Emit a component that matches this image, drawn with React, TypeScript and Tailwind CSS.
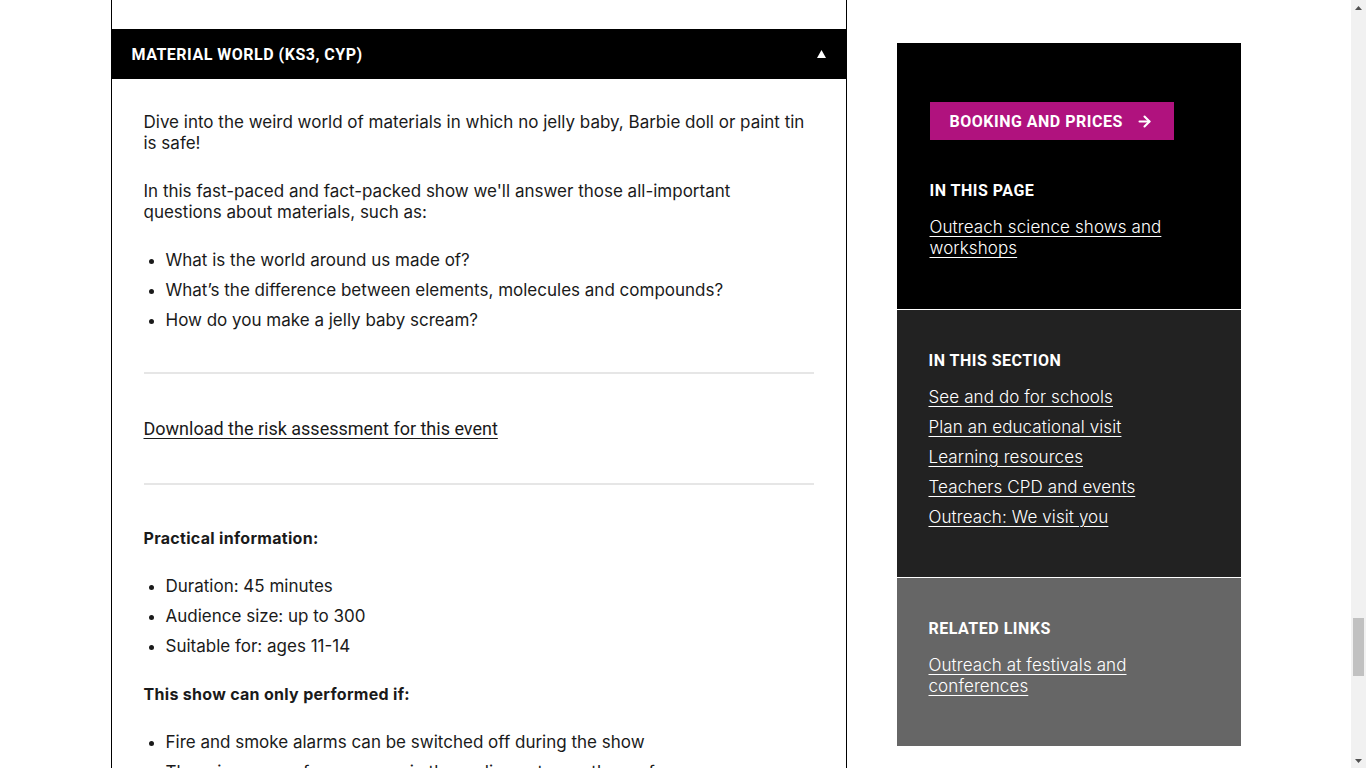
import { ArrowRight } from 'lucide-react';

const body = "font-['Inter',sans-serif] text-[17px] leading-[21px] text-[#1a1a1a]";
const sideLink = "font-['Inter',sans-serif] text-[17px] leading-[21px] tracking-[0.1px] text-white underline underline-offset-[3px] font-light";
const heading = "font-['Roboto',sans-serif] font-bold text-[16px] leading-[21px] tracking-[0.5px] uppercase text-white";

function Scrollbar() {
  return (
    <div className="w-[15px] h-screen bg-[#f1f1f1] flex flex-col items-center shrink-0">
      <div className="h-[15px] flex items-center justify-center">
        <svg width="7" height="4" viewBox="0 0 7 4"><polygon points="3.5,0 7,4 0,4" fill="#505050" /></svg>
      </div>
      <div className="h-[603px]" />
      <div className="h-[58px] w-[11px] bg-[#c1c1c1]" />
      <div className="flex-1" />
      <div className="h-[15px] flex items-center justify-center">
        <svg width="7" height="4" viewBox="0 0 7 4"><polygon points="0,0 7,0 3.5,4" fill="#505050" /></svg>
      </div>
    </div>
  );
}

export default function App() {
  return (
    <div className="flex h-screen overflow-hidden bg-white">
      <div className="flex-1 overflow-hidden">
        <div className="mx-auto w-[1130px] flex gap-[50px] items-start">
          <main className="w-[736px] border-x border-black">
            <div className="h-[29px]" />
            <button className="w-full h-[50px] bg-black flex items-center justify-between px-5">
              <span className={heading}>Material World (KS3, CYP)</span>
              <svg width="9" height="8" viewBox="0 0 9 8"><polygon points="4.5,0 9,8 0,8" fill="#fff" /></svg>
            </button>

            <div className={`pl-8 pr-8 pt-[33px] pb-10 ${body}`}>
              <p className="mb-[27px] pr-[6px]">
                Dive into the weird world of materials in which no jelly baby, Barbie doll or paint tin is safe!
              </p>
              <p className="mb-[27px] pr-[6px]">
                In this fast-paced and fact-packed show we'll answer those all-important questions about materials, such as:
              </p>
              <ul className="list-disc pl-[22px] space-y-[9px] mb-[41px]">
                <li>What is the world around us made of?</li>
                <li>What’s the difference between elements, molecules and compounds?</li>
                <li>How do you make a jelly baby scream?</li>
              </ul>

              <hr className="border-0 h-[2px] bg-[#e6e6e6]" />
              <p className="mt-[44px] mb-[43px]">
                <a href="#" className="font-['Roboto',sans-serif] text-[18px] underline underline-offset-[3px]">
                  Download the risk assessment for this event
                </a>
              </p>
              <hr className="border-0 h-[2px] bg-[#e6e6e6]" />

              <p className="mt-[43px] mb-[27px] font-bold tracking-[0.3px] text-[16px]">Practical information:</p>
              <ul className="list-disc pl-[22px] space-y-[9px] mb-[27px]">
                <li>Duration: 45 minutes</li>
                <li>Audience size: up to 300</li>
                <li>Suitable for: ages 11-14</li>
              </ul>

              <p className="mb-[27px] font-bold tracking-[0.3px] text-[16px]">This show can only performed if:</p>
              <ul className="list-disc pl-[22px] space-y-[9px]">
                <li>Fire and smoke alarms can be switched off during the show</li>
                <li>There is a space for everyone in the audience to see the performers</li>
              </ul>
            </div>
          </main>

          <aside className="w-[344px] mt-[43px]">
            <section className="bg-black px-[33px] pt-[59px] pb-[50px]">
              <a href="#" className="inline-flex items-center h-[38px] w-[244px] bg-[#b0127e] pl-5 gap-[13px]">
                <span className={heading}>Booking and prices</span>
                <ArrowRight className="w-[17px] h-[17px] text-white" strokeWidth={3} />
              </a>
              <h3 className={`${heading} mt-[40px] mb-4`}>In this page</h3>
              <a href="#" className={`${sideLink} block w-[250px]`}>Outreach science shows and workshops</a>
            </section>

            <section className="bg-[#222222] border-t border-white px-[32px] pt-[40px] pb-[49px]">
              <h3 className={`${heading} mb-4`}>In this section</h3>
              <ul className="flex flex-col gap-[9px] leading-[21px]">
                <li className="h-[21px]"><a href="#" className={sideLink}>See and do for schools</a></li>
                <li className="h-[21px]"><a href="#" className={sideLink}>Plan an educational visit</a></li>
                <li className="h-[21px]"><a href="#" className={sideLink}>Learning resources</a></li>
                <li className="h-[21px]"><a href="#" className={sideLink}>Teachers CPD and events</a></li>
                <li className="h-[21px]"><a href="#" className={sideLink}>Outreach: We visit you</a></li>
              </ul>
            </section>

            <section className="bg-[#666666] border-t border-white px-[32px] pt-[40px] pb-[49px]">
              <h3 className={`${heading} mb-4`}>Related links</h3>
              <a href="#" className={`${sideLink} block w-[250px]`}>Outreach at festivals and conferences</a>
            </section>
          </aside>
        </div>
      </div>
      <Scrollbar />
    </div>
  );
}
